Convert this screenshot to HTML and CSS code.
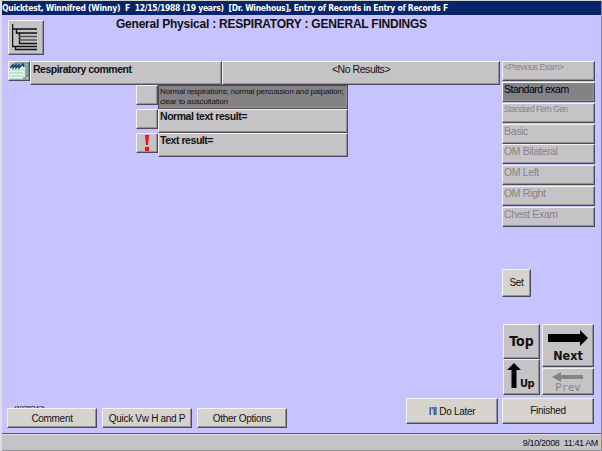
FILE: index.html
```html
<!DOCTYPE html>
<html lang="en">
<head>
<meta charset="utf-8">
<title>Quicktest, Winnifred</title>
<link rel="stylesheet" href="styles.css">
</head>
<body>
<div class="window">
  <header class="titlebar">Quicktest, Winnifred (Winny)&nbsp; F&nbsp; 12/15/1988 (19 years)&nbsp; [Dr. Winehous], Entry of Records in Entry of Records F</header>
  <main class="workspace">
    <section class="content">
      <div class="heading">
        <button class="raised tree" aria-label="Outline">
          <svg width="28" height="28" viewBox="0 0 28 28" fill="none" stroke="#111"><path d="M.5 0V23M0 5H25M4.5 5V10M4 9H25M7.5 9V20M7 19.5H25M0 22.5H25M3.5 23V26M3 25.5H25" stroke-width="1.5"/><path d="M7 12.5H25M7 16H25" stroke="#555" stroke-width="1.3"/></svg>
        </button>
        <h1>General Physical : RESPIRATORY : GENERAL FINDINGS</h1>
      </div>
      <div class="finding">
        <button class="raised note" aria-label="Notes">
          <svg width="20" height="18" viewBox="0 0 20 18"><path d="M6 1H19V14H6z" fill="#b3d1cf" stroke="#467780"/><path d="M3 3H17V16H3z" fill="#d5eee2" stroke="#427d78"/><path d="M0 5H14V17H0z" fill="#f0fff2"/><path d="M0 8H14M0 11H14M0 14H14M0 17H14" stroke="#91cbad"/><path d="M4 5V17M9 5V17" stroke="#c3e5d0"/><path d="M1 6L4 3L4 6L7 3L7 6L10 3L10 6L14 2L15 5" fill="none" stroke="#153d72" stroke-width="1.4"/></svg>
        </button>
        <div class="raised cell name">Respiratory comment</div>
        <div class="raised cell value">&lt;No Results&gt;</div>
      </div>
      <div class="results">
        <button class="raised mark"></button><div class="raised result selected">Normal respirations; normal percussion and palpation;<br>clear to auscultation</div>
        <button class="raised mark"></button><div class="raised result normal">Normal text result=</div>
        <button class="raised mark"><svg width="6" height="16" viewBox="0 0 6 16"><path d="M1 0H5L4 10H2zM1 12H5V16H1z" fill="#f01218"/></svg></button><div class="raised result text">Text result=</div>
      </div>
      <div class="footer">
        <div class="options">
          <div class="record">(192834?)</div>
          <div class="buttons">
            <button class="raised action">Comment</button>
            <button class="raised action quick">Quick Vw H and P</button>
            <button class="raised action">Other Options</button>
          </div>
        </div>
        <button class="raised action later">I'll Do Later</button>
      </div>
    </section>
    <aside class="side">
      <nav class="exams">
        <div class="raised exam small">&lt;Previous Exam&gt;</div>
        <div class="raised exam current">Standard exam</div>
        <div class="raised exam small gen">Standard Fem Gen</div>
        <div class="raised exam">Basic</div>
        <div class="raised exam">OM Bilateral</div>
        <div class="raised exam">OM Left</div>
        <div class="raised exam">OM Right</div>
        <div class="raised exam">Chest Exam</div>
      </nav>
      <button class="raised action set">Set</button>
      <div class="pager">
        <div class="column">
          <button class="raised top">Top</button>
          <button class="raised up"><svg width="14" height="26" viewBox="0 0 14 26"><path d="M7 0L14 7H9.5V25H4.5V7H0z" fill="#000"/></svg><span>Up</span></button>
        </div>
        <div class="column">
          <button class="raised next"><svg width="40" height="16" viewBox="0 0 40 16"><path d="M0 4H32V0L40 8L32 16V12H0z" fill="#000"/></svg><span>Next</span></button>
          <button class="raised prev"><svg width="32" height="10" viewBox="0 0 32 10"><path d="M0 5L9 0V3H31V7H9V10z" fill="#868486"/></svg><span>Prev</span></button>
        </div>
      </div>
      <button class="raised action finished">Finished</button>
    </aside>
  </main>
  <footer class="status">9/10/2008&nbsp; 11:41 AM</footer>
</div>
</body>
</html>
```
FILE: styles.css
```css
* { box-sizing: border-box; }

body {
  margin: 0;
  overflow: hidden;
  font-family: "Liberation Sans", Arial, sans-serif;
  color: #111;
}

svg { flex: none; }

.window {
  width: 602px;
  height: 451px;
  display: flex;
  flex-direction: column;
  background: #c6c3ff;
  border-top: 1px solid #d6d3ce;
  border-left: 2px solid #dedbe4;
  border-right: 1px solid #8b8994;
}

.titlebar {
  height: 14px;
  flex: none;
  background: #08246b;
  color: #fff;
  font: bold 8.5px/15px "DejaVu Sans Condensed", "DejaVu Sans", sans-serif;
  letter-spacing: -0.27px;
  white-space: nowrap;
}

.workspace {
  height: 418px;
  flex: none;
  display: flex;
}

.raised {
  display: block;
  margin: 0;
  padding: 0;
  flex: none;
  border: 1px solid;
  border-color: #f4f2f4 #4d4a57 #4d4a57 #f4f2f4;
  box-shadow: inset -1px -1px #949294;
  background: #c6c3c6;
  border-radius: 0;
  color: #111;
  font-family: inherit;
  white-space: nowrap;
}

.content {
  width: 498px;
  display: flex;
  flex-direction: column;
}

.heading {
  height: 46px;
  display: flex;
  padding: 5px 0 0 6px;
}

.tree { width: 36px; height: 35px; padding: 3px; }
.tree svg { display: block; }

h1 {
  margin: -3px 0 0 72px;
  font-size: 12px;
  line-height: 14px;
  letter-spacing: -0.23px;
  white-space: nowrap;
}

.finding { display: flex; padding-left: 6px; }
.note { width: 22px; height: 20px; }
.note svg { display: block; }
.cell { height: 24px; font-size: 10.5px; line-height: 14px; letter-spacing: -0.45px; }
.name { width: 192px; padding-left: 2px; font-weight: bold; letter-spacing: -0.5px; }
.value { width: 278px; text-align: center; }

.results {
  display: grid;
  grid-template-columns: 22px 190px;
  grid-auto-rows: 24px;
  margin-left: 134px;
}

.mark {
  width: 22px;
  height: 20px;
  display: flex;
  align-items: center;
  justify-content: center;
}

.result {
  padding-left: 1px;
  font-size: 10.5px;
  font-weight: bold;
  line-height: 13px;
  letter-spacing: -0.45px;
}

.selected {
  background: #848284;
  border-color: #4d4a57;
  font-size: 8px;
  font-weight: normal;
  line-height: 10px;
  letter-spacing: -0.15px;
  padding-top: 1px;
}

.footer {
  display: flex;
  justify-content: space-between;
  margin-top: auto;
  padding: 0 2px 5px 5px;
}

.options { padding-top: 6px; }
.record {
  height: 4px;
  margin-left: 7px;
  overflow: hidden;
  font-size: 8px;
  line-height: 10px;
  letter-spacing: -0.7px;
}
.buttons { display: flex; gap: 5px; }

.action {
  width: 90px;
  height: 20px;
  background: #d6d3ce;
  font-size: 10px;
  letter-spacing: -0.3px;
  text-align: center;
}
.later { width: 92px; height: 26px; }

.side { width: 99px; padding: 46px 0 0 2px; }
.exams { display: grid; grid-template-rows: repeat(8, 20px); row-gap: 0.85px; width: 93px; }
.exam {
  height: 20px;
  padding-left: 1px;
  color: #858388;
  font-size: 10.5px;
  line-height: 13px;
  letter-spacing: -0.35px;
}
.small { font-size: 8.5px; line-height: 11px; letter-spacing: -0.5px; }
.gen { letter-spacing: -0.55px; }
.current { background: #848284; color: #000; letter-spacing: -0.5px; }

.set { width: 29px; height: 28px; margin-top: 42px; }

.pager { display: flex; gap: 2px; margin: 27px 0 3px 1px; }
.column { display: flex; flex-direction: column; }
.top {
  width: 37px;
  height: 35px;
  font: bold 14px/30px "DejaVu Sans Condensed", sans-serif;
}
.up {
  display: flex;
  width: 37px;
  height: 36px;
  padding: 3px 0 0 3px;
  font: bold 11px/13px "DejaVu Sans Condensed", sans-serif;
  letter-spacing: -0.5px;
}
.up span { padding-top: 14px; margin-left: -1px; }
.next, .prev {
  display: flex;
  flex-direction: column;
  align-items: center;
  width: 52px;
}
.next {
  height: 43px;
  padding-top: 5px;
  font: bold 12.5px/18px "DejaVu Sans Condensed", sans-serif;
}
.next span { margin-top: 1px; }
.prev {
  height: 27px;
  margin-top: 1px;
  padding-top: 3px;
  color: #868486;
  font: 10.5px/11px "DejaVu Sans Mono", monospace;
}
.finished { width: 92px; height: 26px; }

.status {
  height: 18px;
  flex: none;
  border-top: 1px solid #555260;
  box-shadow: inset 0 1px #e6e4e8, inset 0 -1px #949294;
  background: #c6c3c6;
  padding-right: 3px;
  text-align: right;
  font-size: 9px;
  letter-spacing: -0.38px;
  line-height: 18px;
}
```
